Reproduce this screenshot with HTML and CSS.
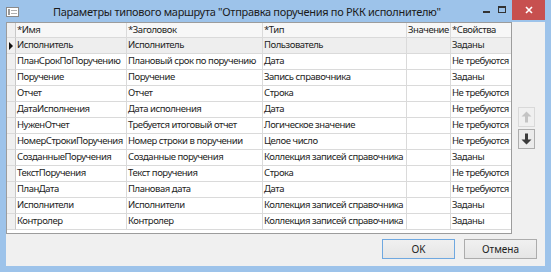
FILE: index.html
```html
<!DOCTYPE html>
<html lang="ru">
<head>
    <meta charset="UTF-8">
    <title>Параметры типового маршрута</title>
    <link rel="stylesheet" href="styles.css">
</head>
<body>
    <div class="window">
        <div class="titlebar">
            <svg class="app-icon" width="13" height="10" viewBox="0 0 13 10">
                <rect x="0.5" y="0.5" width="12" height="9" fill="#fff" stroke="#8a8a8a"/>
                <rect x="2" y="2" width="2" height="6" fill="#9a9a9a"/>
                <rect x="5" y="3" width="6" height="1" fill="#b0b0b0"/>
                <rect x="5" y="6" width="6" height="1" fill="#b0b0b0"/>
            </svg>
            <div class="title">Параметры типового маршрута "Отправка поручения по РКК исполнителю"</div>
            <div class="caption-buttons">
                <span class="cap-btn"><span class="min-glyph"></span></span>
                <span class="cap-btn"><span class="max-glyph"></span></span>
                <span class="cap-btn close">
                    <svg width="8" height="8" viewBox="0 0 8 8">
                        <path d="M1 1 L7 7 M7 1 L1 7" stroke="#fff" stroke-width="1.6"/>
                    </svg>
                </span>
            </div>
        </div>

        <div class="client">
            <div class="grid">
                <div class="row head">
                    <div class="cell rh"></div>
                    <div class="cell c-name">*Имя</div>
                    <div class="cell c-caption">*Заголовок</div>
                    <div class="cell c-type">*Тип</div>
                    <div class="cell c-value">Значение</div>
                    <div class="cell c-props">*Свойства</div>
                </div>
                <div class="row current">
                    <div class="cell rh"><span class="pointer"></span></div>
                    <div class="cell c-name">Исполнитель</div>
                    <div class="cell c-caption">Исполнитель</div>
                    <div class="cell c-type">Пользователь</div>
                    <div class="cell c-value"></div>
                    <div class="cell c-props">Заданы</div>
                </div>
                <div class="row">
                    <div class="cell rh"></div>
                    <div class="cell c-name">ПланСрокПоПоручению</div>
                    <div class="cell c-caption">Плановый срок по поручению</div>
                    <div class="cell c-type">Дата</div>
                    <div class="cell c-value"></div>
                    <div class="cell c-props">Не требуются</div>
                </div>
                <div class="row">
                    <div class="cell rh"></div>
                    <div class="cell c-name">Поручение</div>
                    <div class="cell c-caption">Поручение</div>
                    <div class="cell c-type">Запись справочника</div>
                    <div class="cell c-value"></div>
                    <div class="cell c-props">Заданы</div>
                </div>
                <div class="row">
                    <div class="cell rh"></div>
                    <div class="cell c-name">Отчет</div>
                    <div class="cell c-caption">Отчет</div>
                    <div class="cell c-type">Строка</div>
                    <div class="cell c-value"></div>
                    <div class="cell c-props">Не требуются</div>
                </div>
                <div class="row">
                    <div class="cell rh"></div>
                    <div class="cell c-name">ДатаИсполнения</div>
                    <div class="cell c-caption">Дата исполнения</div>
                    <div class="cell c-type">Дата</div>
                    <div class="cell c-value"></div>
                    <div class="cell c-props">Не требуются</div>
                </div>
                <div class="row">
                    <div class="cell rh"></div>
                    <div class="cell c-name">НуженОтчет</div>
                    <div class="cell c-caption">Требуется итоговый отчет</div>
                    <div class="cell c-type">Логическое значение</div>
                    <div class="cell c-value"></div>
                    <div class="cell c-props">Не требуются</div>
                </div>
                <div class="row">
                    <div class="cell rh"></div>
                    <div class="cell c-name">НомерСтрокиПоручения</div>
                    <div class="cell c-caption">Номер строки в поручении</div>
                    <div class="cell c-type">Целое число</div>
                    <div class="cell c-value"></div>
                    <div class="cell c-props">Не требуются</div>
                </div>
                <div class="row">
                    <div class="cell rh"></div>
                    <div class="cell c-name">СозданныеПоручения</div>
                    <div class="cell c-caption">Созданные поручения</div>
                    <div class="cell c-type">Коллекция записей справочника</div>
                    <div class="cell c-value"></div>
                    <div class="cell c-props">Заданы</div>
                </div>
                <div class="row">
                    <div class="cell rh"></div>
                    <div class="cell c-name">ТекстПоручения</div>
                    <div class="cell c-caption">Текст поручения</div>
                    <div class="cell c-type">Строка</div>
                    <div class="cell c-value"></div>
                    <div class="cell c-props">Не требуются</div>
                </div>
                <div class="row">
                    <div class="cell rh"></div>
                    <div class="cell c-name">ПланДата</div>
                    <div class="cell c-caption">Плановая дата</div>
                    <div class="cell c-type">Дата</div>
                    <div class="cell c-value"></div>
                    <div class="cell c-props">Не требуются</div>
                </div>
                <div class="row">
                    <div class="cell rh"></div>
                    <div class="cell c-name">Исполнители</div>
                    <div class="cell c-caption">Исполнители</div>
                    <div class="cell c-type">Коллекция записей справочника</div>
                    <div class="cell c-value"></div>
                    <div class="cell c-props">Заданы</div>
                </div>
                <div class="row">
                    <div class="cell rh"></div>
                    <div class="cell c-name">Контролер</div>
                    <div class="cell c-caption">Контролер</div>
                    <div class="cell c-type">Коллекция записей справочника</div>
                    <div class="cell c-value"></div>
                    <div class="cell c-props">Заданы</div>
                </div>
            </div>

            <div class="side">
                <button class="arrow-btn disabled">
                    <svg width="11" height="12" viewBox="0 0 11 12">
                        <path d="M5.5 0.5 L10.5 5.5 L7 5.5 L7 11.5 L4 11.5 L4 5.5 L0.5 5.5 Z" fill="#c4c4c4"/>
                    </svg>
                </button>
                <button class="arrow-btn">
                    <svg width="11" height="12" viewBox="0 0 11 12">
                        <path d="M5.5 11.5 L10.5 6.5 L7 6.5 L7 0.5 L4 0.5 L4 6.5 L0.5 6.5 Z" fill="#3a3a3a"/>
                    </svg>
                </button>
            </div>

            <div class="footer">
                <button class="btn default">OK</button>
                <button class="btn">Отмена</button>
            </div>
        </div>
    </div>
</body>
</html>
```

FILE: styles.css
```css
body {
    margin: 0;
    font-family: "Noto Sans", "Open Sans", sans-serif;
    background-color: #9dc3ea;
}
.window {
    width: 551px;
    height: 272px;
    box-sizing: border-box;
    display: flex;
    flex-direction: column;
    padding: 0 6px 6px 6px;
    background-color: #9dc3ea;
}
.titlebar {
    height: 22px;
    display: flex;
    align-items: center;
    flex-shrink: 0;
}
.app-icon {
    margin-left: 0;
    margin-top: 1px;
}
.title {
    flex: 1;
    margin-left: 34px;
    font-size: 11px;
    letter-spacing: -0.3px;
    color: #1b1b1b;
    white-space: nowrap;
}
.caption-buttons {
    display: flex;
    align-self: flex-start;
    height: 20px;
}
.cap-btn {
    width: 16px;
    display: flex;
    justify-content: center;
    align-items: center;
}
.min-glyph {
    width: 7px;
    height: 2px;
    margin-top: 3px;
    background-color: #333;
}
.max-glyph {
    width: 6px;
    height: 4px;
    border: 1px solid #333;
    border-top-width: 2px;
    margin-top: -2px;
}
.close {
    width: 33px;
    margin-left: 2px;
    background-color: #c7504f;
}

.client {
    flex: 1;
    display: grid;
    grid-template-columns: 506px 1fr;
    grid-template-rows: 212px 1fr;
    background-color: #f0f0f0;
}
.grid {
    box-sizing: border-box;
    border: 1px solid #9c9c9c;
    background-color: #fff;
    font-size: 9.5px;
    letter-spacing: -0.45px;
    color: #1e1e1e;
    overflow: hidden;
}
.row {
    display: flex;
    height: 16px;
}
.row.head {
    height: 15px;
    background-color: #f7f7f7;
}
.row.current {
    background-color: #eeeeee;
}
.cell {
    box-sizing: border-box;
    height: 100%;
    padding: 0 0 0 1px;
    border-right: 1px solid #dadada;
    border-bottom: 1px solid #dadada;
    line-height: 14px;
    white-space: nowrap;
    overflow: hidden;
}
.rh {
    width: 9px;
    padding: 0;
    background-color: #f0f0f0;
    border-right-color: #c8c8c8;
    position: relative;
}
.pointer {
    position: absolute;
    left: 2px;
    top: 4px;
    border-left: 4px solid #111;
    border-top: 4px solid transparent;
    border-bottom: 4px solid transparent;
}
.c-name { width: 111px; }
.c-caption { width: 136px; }
.c-type { width: 144px; }
.c-value { width: 44px; }
.c-props { width: 60px; border-right: none; }

.side {
    display: flex;
    flex-direction: column;
    justify-content: center;
    align-items: flex-start;
    gap: 2px;
    padding-left: 6px;
}
.arrow-btn {
    width: 17px;
    height: 20px;
    padding: 0;
    display: flex;
    justify-content: center;
    align-items: center;
    border: 1px solid #adadad;
    background-color: #ebebeb;
}
.arrow-btn.disabled {
    border-color: #d9d9d9;
    background-color: #f0f0f0;
}

.footer {
    grid-column: 1 / 3;
    display: flex;
    justify-content: flex-end;
    align-items: flex-start;
    gap: 9px;
    padding: 5px 8px 0 0;
}
.btn {
    width: 73px;
    height: 20px;
    padding: 0;
    font-family: "Noto Sans", "Open Sans", sans-serif;
    font-size: 10px;
    color: #1e1e1e;
    border: 1px solid #acacac;
    background: linear-gradient(#f0f0f0, #e5e5e5);
}
.btn.default {
    border-color: #6fa8e0;
}
```
